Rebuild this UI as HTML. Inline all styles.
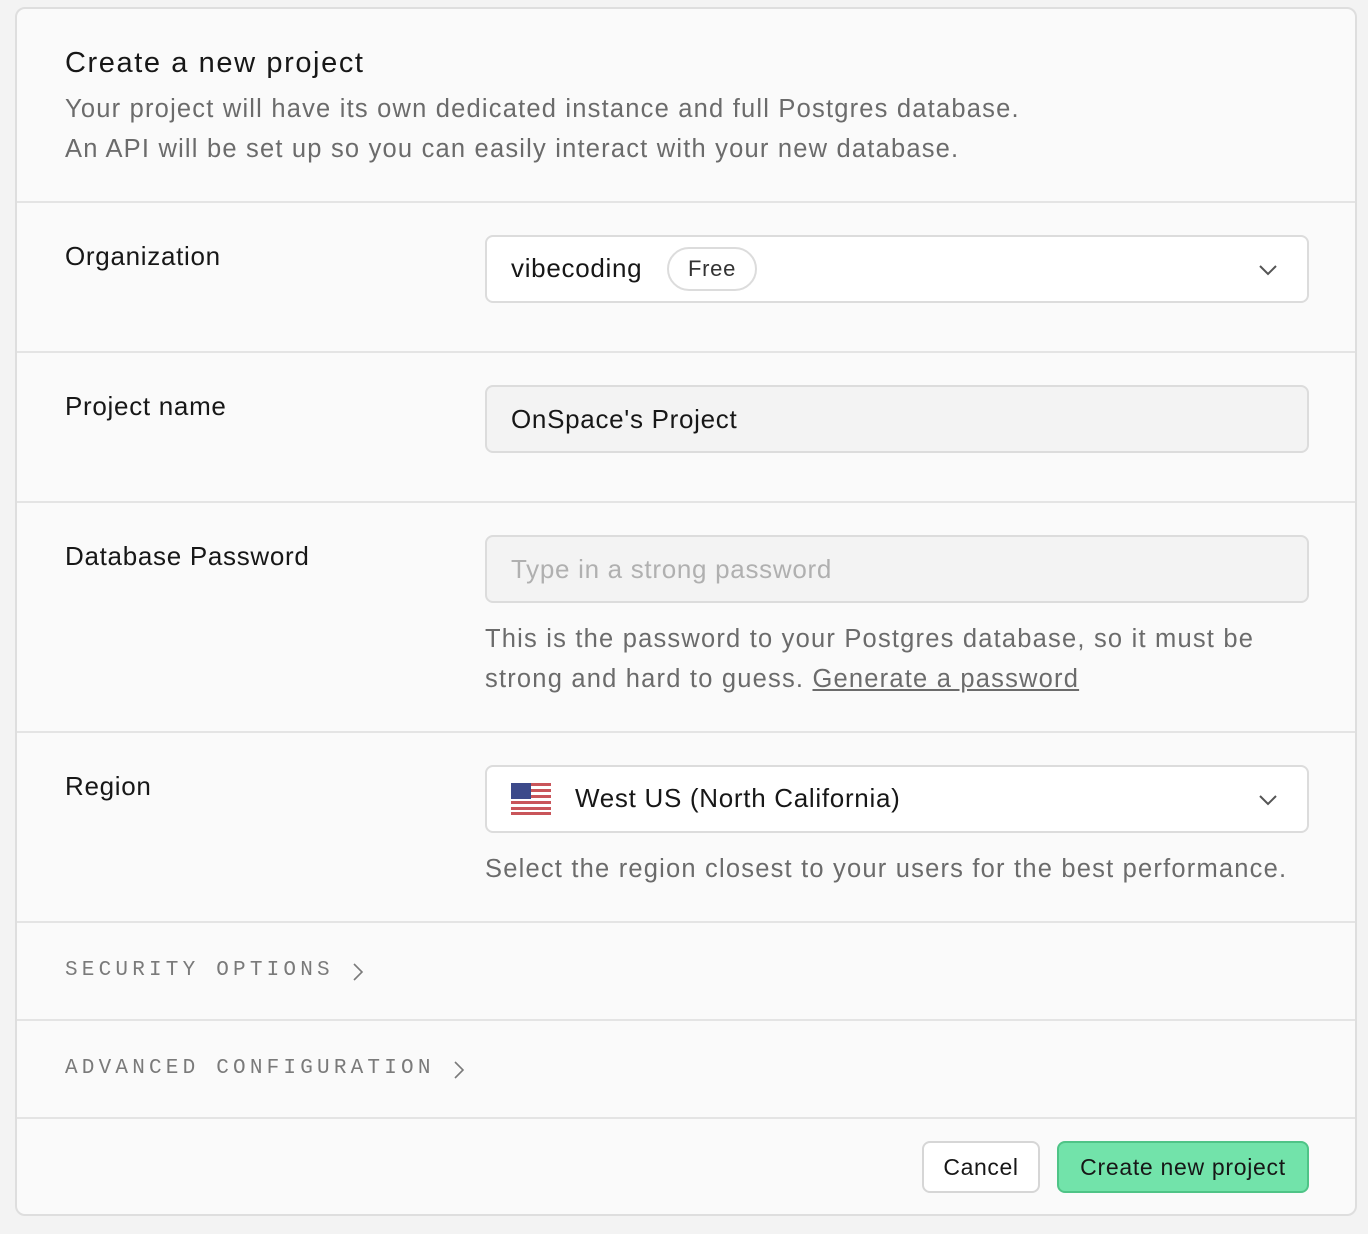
<!DOCTYPE html>
<html><head><style>
*{box-sizing:border-box;margin:0;padding:0}
body{width:1368px;height:1234px;background:#f3f3f3;font-family:"Liberation Sans",sans-serif;color:#171717;position:relative;overflow:hidden}
.card{position:absolute;left:15px;top:7px;width:1342px;height:1209px;background:#fafafa;border:2px solid #dedede;border-radius:10px;overflow:hidden}
.abs{position:absolute}
.hr{position:absolute;left:0;right:0;height:2px;background:#e4e4e4}
.lbl{position:absolute;left:48px;font-size:26px;color:#171717;letter-spacing:0.7px}
.box{position:absolute;left:468px;width:824px;height:68px;border:2px solid #dcdcdc;border-radius:8px;background:#fff;letter-spacing:0.7px}
.muted{color:#6b6b6b;letter-spacing:1.2px}
.mono{position:absolute;left:48px;font-family:"Liberation Mono",monospace;font-size:21px;letter-spacing:4.2px;color:#7a7a7a}
.chev{position:absolute;right:28px;top:22px}
</style></head><body>
<div class="card">
<div class="abs" style="left:48px;top:38px;font-size:29px;letter-spacing:1.6px">Create a new project</div>
<div class="abs muted" style="left:48px;top:80px;font-size:25.5px;line-height:40px">Your project will have its own dedicated instance and full Postgres database.<br>An API will be set up so you can easily interact with your new database.</div>
<div class="hr" style="top:192px"></div>
<div class="lbl" style="top:232px">Organization</div>
<div class="box" style="top:226px"><span class="abs" style="left:24px;top:16px;font-size:26px">vibecoding</span>
<span class="abs" style="left:180px;top:10px;height:44px;width:90px;border:2px solid #dcdcdc;border-radius:22px;font-size:22px;text-align:center;line-height:40px;color:#333">Free</span>
<svg class="chev" width="22" height="22" viewBox="0 0 22 22"><path d="M3 7l8 8 8-8" fill="none" stroke="#555" stroke-width="2"/></svg></div>
<div class="hr" style="top:342px"></div>
<div class="lbl" style="top:382px">Project name</div>
<div class="box" style="top:376px;background:#f3f3f3"><span class="abs" style="left:24px;top:17px;font-size:26px">OnSpace's Project</span></div>
<div class="hr" style="top:492px"></div>
<div class="lbl" style="top:532px">Database Password</div>
<div class="box" style="top:526px;background:#f3f3f3"><span class="abs" style="left:24px;top:17px;font-size:26px;color:#b0b0b0">Type in a strong password</span></div>
<div class="abs muted" style="left:468px;top:610px;font-size:25.5px;line-height:40px">This is the password to your Postgres database, so it must be<br>strong and hard to guess. <u>Generate a password</u></div>
<div class="hr" style="top:722px"></div>
<div class="lbl" style="top:762px">Region</div>
<div class="box" style="top:756px"><svg class="abs" style="left:24px;top:16px" width="40" height="32" viewBox="0 0 40 32"><rect width="40" height="32" rx="3" fill="#fff"/><g fill="#c9555a"><rect y="0" width="40" height="3"/><rect y="6" width="40" height="3"/><rect y="12" width="40" height="3"/><rect y="18" width="40" height="3"/><rect y="24" width="40" height="3"/><rect y="29" width="40" height="3"/></g><rect width="20" height="16" fill="#3c4a8a"/></svg>
<span class="abs" style="left:88px;top:16px;font-size:26px">West US (North California)</span>
<svg class="chev" width="22" height="22" viewBox="0 0 22 22"><path d="M3 7l8 8 8-8" fill="none" stroke="#555" stroke-width="2"/></svg></div>
<div class="abs muted" style="left:468px;top:840px;font-size:25.5px;line-height:40px">Select the region closest to your users for the best performance.</div>
<div class="hr" style="top:912px"></div>
<div class="mono" style="top:950px">SECURITY OPTIONS</div>
<svg class="abs" style="left:334px;top:953px" width="14" height="20" viewBox="0 0 14 20"><path d="M3 2l8 8-8 8" fill="none" stroke="#7a7a7a" stroke-width="1.6"/></svg>
<div class="hr" style="top:1010px"></div>
<div class="mono" style="top:1048px">ADVANCED CONFIGURATION</div>
<svg class="abs" style="left:435px;top:1051px" width="14" height="20" viewBox="0 0 14 20"><path d="M3 2l8 8-8 8" fill="none" stroke="#7a7a7a" stroke-width="1.6"/></svg>
<div class="hr" style="top:1108px"></div>
<div class="abs" style="left:905px;top:1132px;width:118px;height:52px;border:2px solid #d6d6d6;border-radius:8px;background:#fff;font-size:23px;text-align:center;line-height:48px;letter-spacing:0.6px">Cancel</div>
<div class="abs" style="left:1040px;top:1132px;width:252px;height:52px;border:2px solid #4fc487;border-radius:8px;background:#72e3aa;font-size:23px;text-align:center;line-height:48px;letter-spacing:0.7px">Create new project</div>
</div>
</body></html>
